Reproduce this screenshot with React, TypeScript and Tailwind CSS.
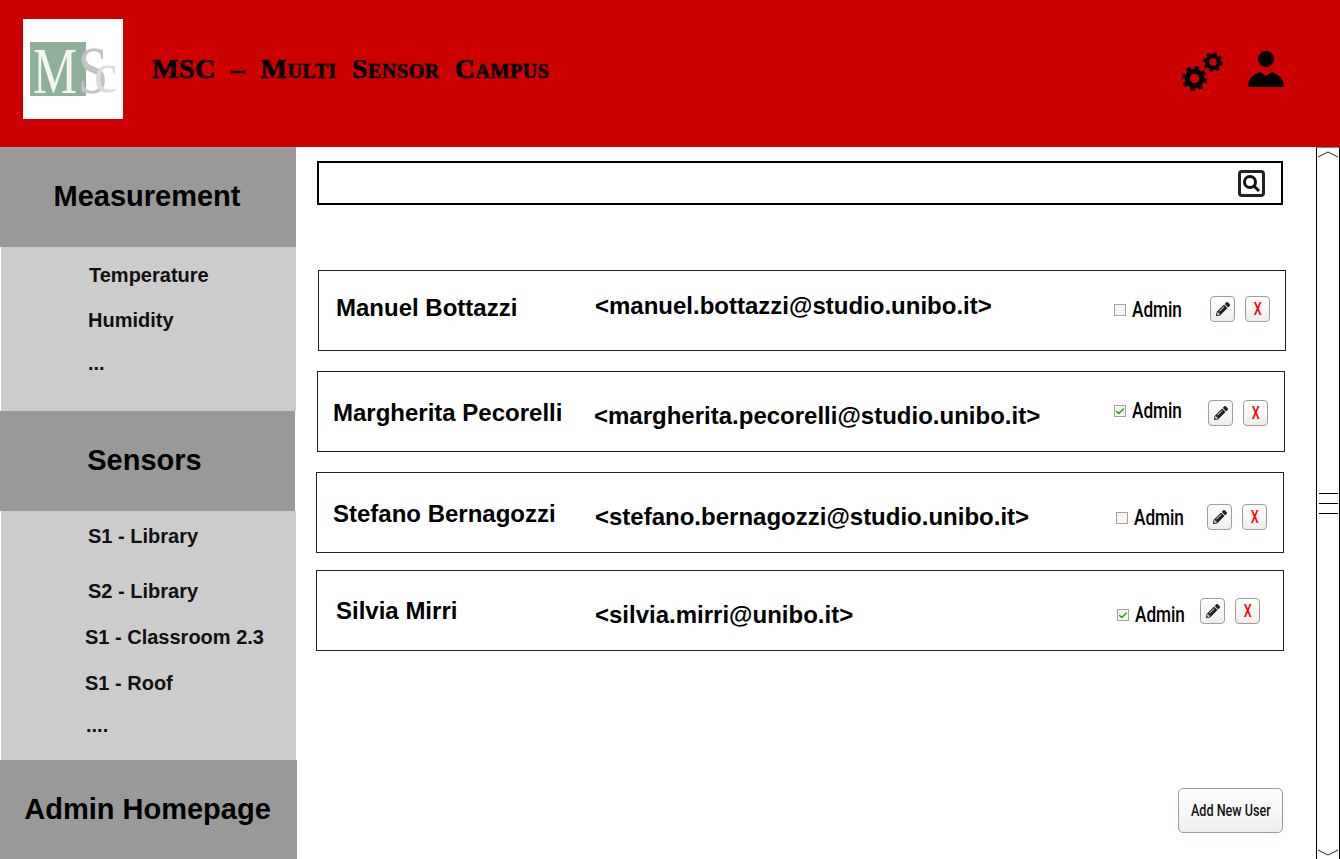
import { Check } from "lucide-react";
import { FaPencilAlt } from "react-icons/fa";

const users = [
  {
    name: "Manuel Bottazzi",
    email: "<manuel.bottazzi@studio.unibo.it>",
    admin: false,
    card: "ml-[21px] mt-[65px]",
    pad: "pl-[17px]",
    nameCls: "w-[259px] mt-[-5px]",
    emailCls: "w-[519px] mb-[9px]",
    adminCls: "w-[96px]",
    labelCls: "mt-[-1px]",
    btnCls: "mt-[-3px]",
  },
  {
    name: "Margherita Pecorelli",
    email: "<margherita.pecorelli@studio.unibo.it>",
    admin: true,
    card: "ml-[20px] mt-[20px]",
    pad: "pl-[15px]",
    nameCls: "w-[261px] mt-[3px]",
    emailCls: "w-[520px] mt-[9px]",
    adminCls: "w-[94px]",
    labelCls: "mb-[1px]",
    btnCls: "mt-[3px]",
  },
  {
    name: "Stefano Bernagozzi",
    email: "<stefano.bernagozzi@studio.unibo.it>",
    admin: false,
    card: "ml-[19px] mt-[20px]",
    pad: "pl-[16px]",
    nameCls: "w-[262px] mt-[3px]",
    emailCls: "w-[521px] mt-[8px]",
    adminCls: "w-[91px]",
    labelCls: "mt-[11px]",
    btnCls: "mt-[8px]",
  },
  {
    name: "Silvia Mirri",
    email: "<silvia.mirri@unibo.it>",
    admin: true,
    card: "ml-[19px] mt-[17px]",
    pad: "pl-[19px]",
    nameCls: "w-[259px] mt-[1px]",
    emailCls: "w-[522px] mt-[8px]",
    adminCls: "w-[83px]",
    labelCls: "mt-[9px]",
    btnCls: "mt-[1px]",
  },
];

function Gear({ size }: { size: number }) {
  return (
    <svg width={size} height={size} viewBox="0 0 24 24">
      <circle cx="12" cy="12" r="10" fill="none" stroke="#000" strokeWidth="4" strokeDasharray="4 3.85" />
      <circle cx="12" cy="12" r="7" fill="none" stroke="#000" strokeWidth="5" />
    </svg>
  );
}

function PersonIcon() {
  return (
    <svg width="36" height="36" viewBox="0 0 36 36">
      <circle cx="18" cy="8" r="8" fill="#000" />
      <path d="M0 36 C0 27 5 24 12 21 L18 25 L24 21 C31 24 36 27 36 36 Z" fill="#000" />
    </svg>
  );
}

function SearchIcon() {
  return (
    <svg width="19" height="19" viewBox="0 0 19 19">
      <circle cx="8" cy="8" r="5.5" fill="none" stroke="#111" strokeWidth="3" />
      <path d="M12 12 L17 17" stroke="#111" strokeWidth="3" />
    </svg>
  );
}

function SideHeader({ label, cls }: { label: string; cls: string }) {
  return (
    <div className={`h-[100px] shrink-0 bg-[#999999] flex items-center justify-center text-[29px] font-bold text-black ${cls}`}>
      {label}
    </div>
  );
}

function SideItem({ label, cls }: { label: string; cls: string }) {
  return <div className={`absolute text-[20px] font-bold text-[#111] leading-none ${cls}`}>{label}</div>;
}

function SmallBtn({ children }: { children: React.ReactNode }) {
  return (
    <div className="w-[25px] h-[26px] rounded-[4px] border border-[#a89c8c] bg-gradient-to-b from-white to-[#eeeeee] flex items-center justify-center">
      {children}
    </div>
  );
}

export default function App() {
  return (
    <div className="w-[1340px] h-[859px] overflow-hidden bg-white flex flex-col font-['Liberation_Sans',Arial,sans-serif] text-black">
      {/* Header */}
      <header className="h-[147px] shrink-0 bg-[#cc0000] flex items-start">
        <div className="relative ml-[23px] mt-[19px] w-[100px] h-[100px] bg-white shrink-0 overflow-hidden font-['Liberation_Serif',serif]">
          <div className="absolute left-[7px] top-[23px] w-[56px] h-[54px] bg-[#8fb09b]" />
          <span className="absolute left-[10px] top-[12px] text-[66px] leading-[80px] origin-left scale-x-75 text-[#f4f6f0]">M</span>
          <span className="absolute left-[55px] top-[11px] text-[68px] leading-[80px] origin-left scale-x-[0.8] text-[#c4c4c4]">S</span>
          <span className="absolute left-[71px] top-[14px] text-[58px] leading-[80px] origin-left scale-x-90 text-[#dcdcdc]">c</span>
        </div>
        <div className="ml-[29px] mt-[51px] text-[28px] leading-[36px] font-bold tracking-[0.55px] whitespace-pre font-['Liberation_Serif',serif] [font-variant:small-caps] [-webkit-text-stroke:0.6px_black]">
          MSC  –  Multi  Sensor  Campus
        </div>
        <div className="ml-auto mr-[56px] mt-[51px] flex items-start">
          <div className="relative w-[44px] h-[44px] mr-[22px]">
            <div className="absolute left-0 top-[15px]"><Gear size={25} /></div>
            <div className="absolute left-[21px] top-[1px]"><Gear size={20} /></div>
          </div>
          <PersonIcon />
        </div>
      </header>

      <div className="flex-1 flex min-h-0">
        {/* Sidebar */}
        <aside className="w-[297px] shrink-0 flex flex-col">
          <SideHeader label="Measurement" cls="w-[296px] pr-[2px]" />
          <div className="relative h-[164px] shrink-0 ml-[1px] w-[295px] bg-[#cccccc]">
            <SideItem label="Temperature" cls="left-[88px] top-[18px]" />
            <SideItem label="Humidity" cls="left-[87px] top-[63px]" />
            <SideItem label="..." cls="left-[87px] top-[106px]" />
          </div>
          <SideHeader label="Sensors" cls="w-[295px] pr-[6px]" />
          <div className="relative h-[249px] shrink-0 ml-[1px] w-[295px] bg-[#cccccc]">
            <SideItem label="S1 - Library" cls="left-[87px] top-[15px]" />
            <SideItem label="S2 - Library" cls="left-[87px] top-[70px]" />
            <SideItem label="S1 - Classroom 2.3" cls="left-[84px] top-[116px]" />
            <SideItem label="S1 - Roof" cls="left-[84px] top-[162px]" />
            <SideItem label="...." cls="left-[85px] top-[204px]" />
          </div>
          <SideHeader label="Admin Homepage" cls="w-[297px] pr-[2px]" />
        </aside>

        {/* Main */}
        <main className="w-[1019px] shrink-0 flex flex-col">
          <div className="ml-[20px] mt-[14px] w-[966px] h-[44px] border-2 border-black flex items-center justify-end pr-[16px]">
            <div className="w-[27px] h-[27px] rounded-[4px] border-[3px] border-[#222] flex items-center justify-center">
              <SearchIcon />
            </div>
          </div>

          {users.map((u) => (
            <div
              key={u.email}
              className={`w-[968px] h-[81px] shrink-0 border border-[#222] flex items-center ${u.card} ${u.pad}`}
            >
              <div className={`text-[24px] font-bold leading-[30px] whitespace-nowrap shrink-0 ${u.nameCls}`}>{u.name}</div>
              <div className={`text-[24px] font-bold leading-[30px] whitespace-nowrap shrink-0 ${u.emailCls}`}>{u.email}</div>
              <div className={`flex items-center shrink-0 ${u.adminCls} ${u.labelCls}`}>
                <div className="w-[12px] h-[12px] border border-[#a8a298] bg-[#f6f6f6] flex items-center justify-center shrink-0">
                  {u.admin && <Check size={11} strokeWidth={3.5} color="#22a010" />}
                </div>
                <span className="ml-[6px] text-[22px] leading-[26px] font-medium origin-left scale-x-[0.78] font-['Roboto',sans-serif]">Admin</span>
              </div>
              <div className={`flex gap-[10px] shrink-0 ${u.btnCls}`}>
                <SmallBtn><FaPencilAlt size={14} color="#222" /></SmallBtn>
                <SmallBtn><span className="text-[18px] font-medium leading-none text-[#ff0000] scale-x-[0.7] font-['Roboto',sans-serif]">X</span></SmallBtn>
              </div>
            </div>
          ))}

          <div className="mt-[137px] ml-[881px] w-[105px] h-[45px] rounded-[5px] border border-[#a89c8c] bg-gradient-to-b from-white to-[#eeeeee] flex items-center justify-center overflow-hidden">
            <span className="text-[17px] font-medium whitespace-nowrap scale-x-[0.74] text-[#111] font-['Roboto',sans-serif]">Add New User</span>
          </div>
        </main>

        {/* Scrollbar */}
        <div className="w-[24px] shrink-0 border-l border-r border-t border-l-black border-r-black border-t-[#888] flex flex-col items-center justify-between">
          <svg width="22" height="8" viewBox="0 0 22 8" className="mt-[2px]"><path d="M1 7 L11 2 L21 7" fill="none" stroke="#222" /></svg>
          <div className="flex flex-col gap-[9px] w-[19px]">
            <div className="h-[1px] bg-black" />
            <div className="h-[1px] bg-black" />
            <div className="h-[1px] bg-black" />
          </div>
          <svg width="22" height="8" viewBox="0 0 22 8" className="mb-[2px]"><path d="M1 1 L11 6 L21 1" fill="none" stroke="#222" /></svg>
        </div>
      </div>
    </div>
  );
}
